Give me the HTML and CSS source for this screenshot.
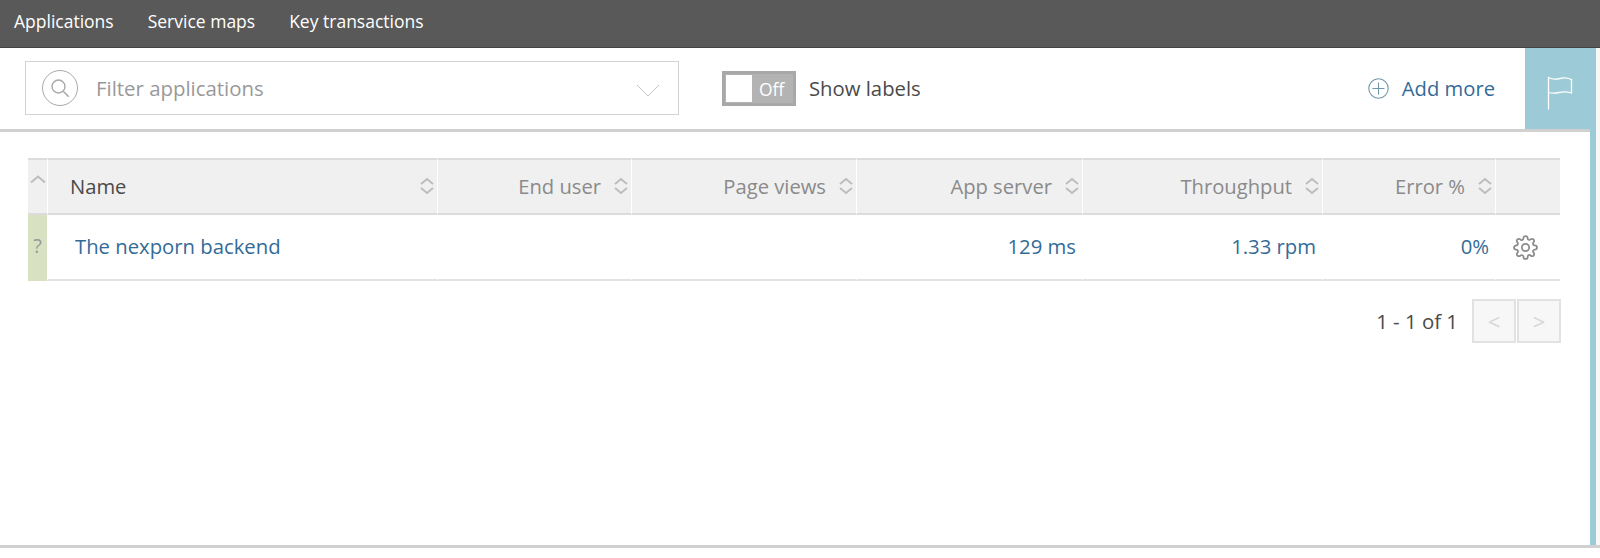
FILE: index.html
```html
<!DOCTYPE html>
<html lang="en">
<head>
<meta charset="utf-8">
<title>Applications</title>
<link rel="stylesheet" href="styles.css">
</head>
<body>
<svg class="defs" width="0" height="0" aria-hidden="true">
  <symbol id="sort" viewBox="0 0 14 18">
    <path d="M1 7 7 2l6 5M1 11l6 5 6-5" fill="none" stroke="currentColor" stroke-width="2"/>
  </symbol>
</svg>
<div class="frame">
  <nav class="nav">
    <a class="nav-link">Applications</a>
    <a class="nav-link">Service maps</a>
    <a class="nav-link">Key transactions</a>
  </nav>
  <div class="toolbar">
    <div class="filter">
      <span class="search-ring">
        <svg width="20" height="20" viewBox="0 0 20 20"><circle cx="8.5" cy="8.5" r="6.5" fill="none" stroke="#a8a8a8" stroke-width="1.4"/><path d="m13.2 13.2 5.6 5.6" stroke="#a8a8a8" stroke-width="1.6"/></svg>
      </span>
      <span class="filter-text">Filter applications</span>
      <svg class="filter-caret" width="24" height="13" viewBox="0 0 24 13"><path d="m1 1 11 11L23 1" fill="none" stroke="#c4c4c4" stroke-width="1"/></svg>
    </div>
    <div class="toggle"><span class="knob"></span><span class="toggle-text">Off</span></div>
    <span class="toggle-label">Show labels</span>
    <a class="add-more">
      <svg width="21" height="21" viewBox="0 0 21 21"><circle cx="10.5" cy="10.5" r="9.7" fill="none" stroke="#6f97ab" stroke-width="1.1"/><path d="M10.5 4.5v12M4.5 10.5h12" stroke="#6f97ab" stroke-width="1.1"/></svg>
      <span>Add more</span>
    </a>
    <div class="flag">
      <svg width="26" height="34" viewBox="0 0 26 34"><path d="M1.500 33.500V1.500C6 4 9 3.500 13 2.500 17 1.500 21 2 24.500 3.500V17C20 15.500 16 15.500 12 16.500 8 17.500 5 17.500 1.500 16.500" fill="none" stroke="#fff" stroke-width="1.300"/></svg>
    </div>
  </div>
  <div class="body">
    <main class="content">
      <table class="grid">
        <colgroup>
          <col class="c-status"><col class="c-name"><col class="c-user"><col class="c-views"><col class="c-server"><col class="c-through"><col class="c-error"><col class="c-gear">
        </colgroup>
        <thead>
          <tr>
            <th class="th-status"><svg width="16" height="8" viewBox="0 0 16 8"><path d="M1 7.500 8 1.500l7 6" fill="none" stroke="#bdbdbd" stroke-width="2"/></svg></th>
            <th class="th-name"><span class="th-in"><span class="name-label">Name</span><svg class="sort" width="14" height="18"><use href="#sort"/></svg></span></th>
            <th><span class="th-in end"><span>End user</span><svg class="sort" width="14" height="18"><use href="#sort"/></svg></span></th>
            <th><span class="th-in end"><span>Page views</span><svg class="sort" width="14" height="18"><use href="#sort"/></svg></span></th>
            <th><span class="th-in end"><span>App server</span><svg class="sort" width="14" height="18"><use href="#sort"/></svg></span></th>
            <th><span class="th-in end"><span>Throughput</span><svg class="sort" width="14" height="18"><use href="#sort"/></svg></span></th>
            <th><span class="th-in end"><span>Error %</span><svg class="sort" width="14" height="18"><use href="#sort"/></svg></span></th>
            <th></th>
          </tr>
        </thead>
        <tbody>
          <tr>
            <td class="td-status">?</td>
            <td class="td-name"><a>The nexporn backend</a></td>
            <td></td>
            <td></td>
            <td class="num"><a>129 ms</a></td>
            <td class="num"><a>1.33 rpm</a></td>
            <td class="num"><a>0%</a></td>
            <td class="td-gear">
              <svg width="25" height="25" viewBox="0 0 24 24" fill="none" stroke="#8c8c8c" stroke-width="1.700"><circle cx="12" cy="12" r="3.500"/><path d="M19.400 15a1.650 1.650 0 0 0 .33 1.820l.06.06a2 2 0 0 1 0 2.830 2 2 0 0 1-2.830 0l-.06-.06a1.650 1.650 0 0 0-1.820-.33 1.650 1.650 0 0 0-1 1.510V21a2 2 0 0 1-2 2 2 2 0 0 1-2-2v-.09A1.650 1.650 0 0 0 9 19.400a1.650 1.650 0 0 0-1.820.33l-.06.06a2 2 0 0 1-2.830 0 2 2 0 0 1 0-2.830l.06-.06a1.650 1.650 0 0 0 .33-1.820 1.650 1.650 0 0 0-1.510-1H3a2 2 0 0 1-2-2 2 2 0 0 1 2-2h.09A1.650 1.650 0 0 0 4.600 9a1.650 1.650 0 0 0-.33-1.820l-.06-.06a2 2 0 0 1 0-2.830 2 2 0 0 1 2.830 0l.06.06a1.650 1.650 0 0 0 1.820.33H9a1.650 1.650 0 0 0 1-1.510V3a2 2 0 0 1 2-2 2 2 0 0 1 2 2v.09a1.650 1.650 0 0 0 1 1.510 1.650 1.650 0 0 0 1.820-.33l.06-.06a2 2 0 0 1 2.830 0 2 2 0 0 1 0 2.830l-.06.06a1.650 1.650 0 0 0-.33 1.820V9a1.650 1.650 0 0 0 1.510 1H21a2 2 0 0 1 2 2 2 2 0 0 1-2 2h-.09a1.650 1.650 0 0 0-1.510 1z"/></svg>
            </td>
          </tr>
        </tbody>
      </table>
      <div class="pager">
        <span class="pager-text">1 - 1 of 1</span>
        <span class="pager-btn">&lt;</span>
        <span class="pager-btn">&gt;</span>
      </div>
    </main>
    <div class="rail"></div>
  </div>
</div>
</body>
</html>
```

FILE: styles.css
```css
* { box-sizing: border-box; }
html, body { margin: 0; padding: 0; background: #fff; }
body { font-family: "Open Sans", "Liberation Sans", sans-serif; color: #4a4a4a; height: 558px; overflow: hidden; }
.defs { position: absolute; }

.frame {
  height: 548px;
  display: flex;
  flex-direction: column;
  border-bottom: 3px solid #d0d0d0;
  background: #f8f8f8;
}

.nav {
  height: 48px;
  flex: none;
  background: #595959;
  border-bottom: 1px solid #444;
  display: flex;
  align-items: center;
  gap: 34px;
  padding: 0 0 5px 14px;
  color: #fff;
  font-size: 17.5px;
}

.toolbar {
  height: 81px;
  flex: none;
  margin-right: 4px;
  background: #fff;
  display: flex;
  align-items: flex-start;
}

.filter {
  width: 654px;
  height: 54px;
  margin: 13px 0 0 25px;
  border: 1px solid #d2d2d2;
  display: flex;
  align-items: center;
  padding: 0 18px 0 16px;
}
.search-ring {
  width: 36px;
  height: 36px;
  border: 1.5px solid #a8a8a8;
  border-radius: 50%;
  display: flex;
  align-items: center;
  justify-content: center;
  flex: none;
}
.filter-text { margin-left: 18px; font-size: 20.4px; color: #999; flex: 1; }
.filter-caret { flex: none; margin-top: 4px; }

.toggle {
  width: 74px;
  height: 35px;
  margin: 23px 0 0 43px;
  background: #b3b3b3;
  border: 3px solid #a8a8a8;
  display: flex;
  align-items: center;
  padding-left: 1px;
  flex: none;
}
.knob { width: 26px; height: 27px; background: #fff; flex: none; }
.toggle-text { margin-left: 7px; color: #fff; font-size: 17.5px; }
.toggle-label { margin: 26px 0 0 13px; font-size: 20.3px; color: #4a4a4a; }

.add-more {
  margin: 26px 30px 0 auto;
  display: flex;
  align-items: center;
  gap: 13px;
  color: #336b97;
  font-size: 20.2px;
}

.flag {
  width: 71px;
  height: 81px;
  flex: none;
  background: #9ccbd7;
  display: flex;
  align-items: flex-start;
  justify-content: center;
  padding: 28px 1px 0 0;
}

.body { flex: 1; display: flex; margin-right: 4px; min-height: 0; }
.content {
  flex: 1;
  background: #fff;
  border-top: 3px solid #d0d0d0;
  padding: 26px 29px 0 28px;
}
.rail { width: 6px; flex: none; background: #9ccbd7; }

.grid { width: 1532px; table-layout: fixed; border-collapse: separate; border-spacing: 0; }
.c-status { width: 19px; }
.c-name { width: 390px; }
.c-user { width: 194px; }
.c-views { width: 225px; }
.c-server { width: 226px; }
.c-through { width: 240px; }
.c-error { width: 173px; }
.c-gear { width: 65px; }

th {
  height: 57px;
  padding: 0 3px 2px 0;
  background: #f0f0f0;
  border-top: 2px solid #dcdcdc;
  border-bottom: 2px solid #dcdcdc;
  border-left: 1px solid #fff;
  font-weight: 400;
  font-size: 20.2px;
  color: #8a8a8a;
  vertical-align: middle;
}
.th-status { border-left: 0; padding: 0; vertical-align: top; text-align: center; line-height: 1; }
.th-status svg { margin-top: 15px; }
.th-name { padding-left: 22px; }
.name-label { color: #4a4a4a; }
.th-in { display: flex; align-items: center; justify-content: space-between; }
.th-in.end { justify-content: flex-end; gap: 13px; }
.sort { color: #bdbdbd; flex: none; }

td {
  height: 66px;
  padding: 0 6px 3px 0;
  border-bottom: 2px solid #e2e2e2;
  border-left: 1px solid #fff;
  font-size: 20.3px;
  color: #336b97;
  white-space: nowrap;
}
.td-status {
  border-left: 0;
  border-bottom-color: #d8e2c2;
  padding: 0 0 3px;
  background: #d8e2c2;
  color: #9a9a9a;
  text-align: center;
  font-size: 20px;
}
.td-name { padding-left: 27px; }
.num { text-align: right; }
.td-gear { text-align: center; line-height: 0; padding: 0 5px 0 0; }

.pager {
  width: 1533px;
  display: flex;
  align-items: center;
  justify-content: flex-end;
  margin-top: 18px;
  gap: 1px;
}
.pager-text { font-size: 20.4px; color: #4a4a4a; margin-right: 13px; }
.pager-btn {
  width: 44px;
  height: 44px;
  background: #f7f7f7;
  border: 2px solid #e2e2e2;
  color: #d6d6d6;
  font-size: 22px;
  display: flex;
  align-items: center;
  justify-content: center;
}
```
